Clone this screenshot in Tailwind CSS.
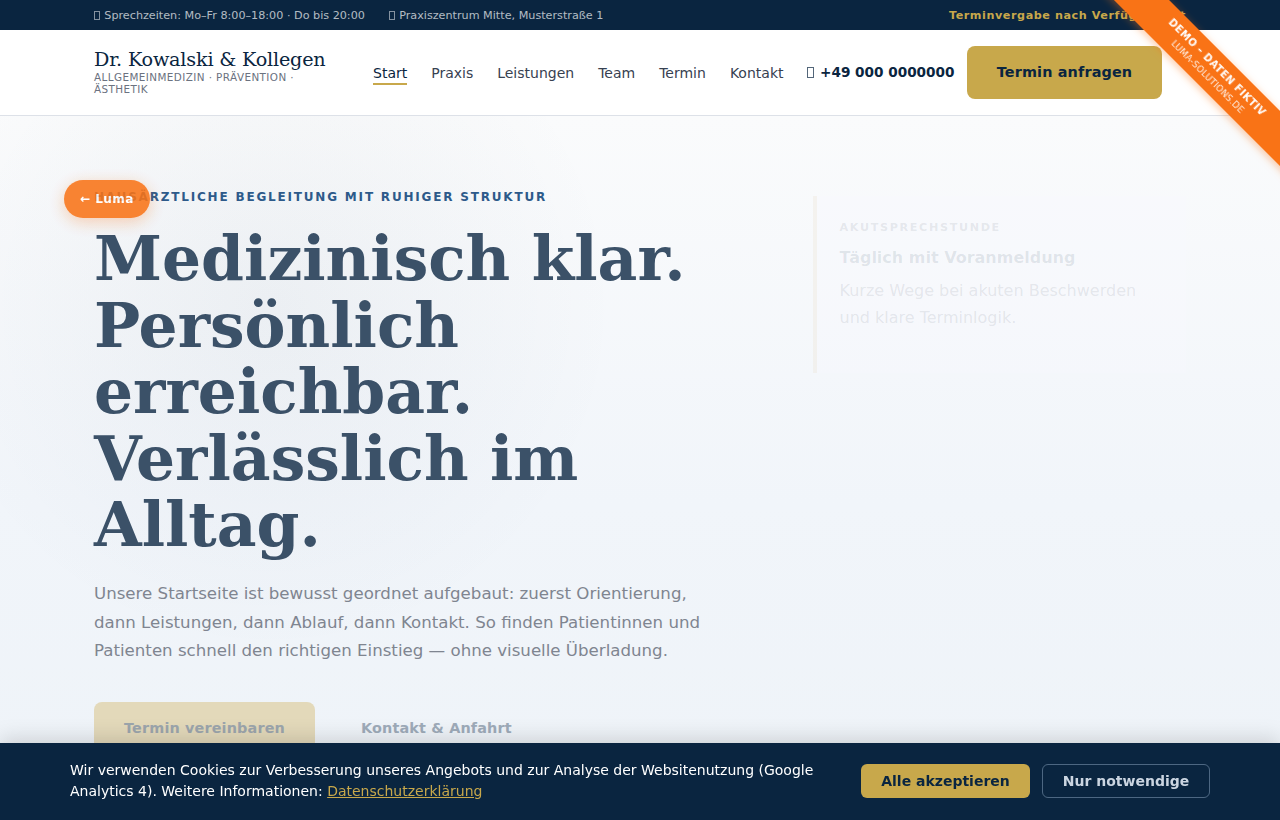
<!DOCTYPE html>
<html lang="de">
  <head>
    <meta charset="utf-8" />
    <meta name="viewport" content="width=device-width, initial-scale=1" />
    <title>Dr. Kowalski &amp; Kollegen</title>
    <script src="https://cdn.jsdelivr.net/npm/@tailwindcss/browser@4"></script>
  </head>
  <body class="flex h-screen flex-col overflow-hidden bg-[#eef3f8] font-['DejaVu_Sans',sans-serif] text-[#0a2540]">
    <!-- Top bar -->
    <div class="h-[30px] shrink-0 bg-[#0a2540] text-[11.2px] text-white/70">
      <div class="mx-auto flex h-full max-w-[1140px] items-center justify-between px-6 pt-0.5">
        <div class="flex gap-6">
          <span class="flex items-center"><i class="mr-[4.3px] h-[9px] w-[6px] border border-white/50"></i>Sprechzeiten: Mo–Fr 8:00–18:00 · Do bis 20:00</span>
          <span class="flex items-center"><i class="mr-[4.3px] h-[9px] w-[6px] border border-white/50"></i>Praxiszentrum Mitte, Musterstraße 1</span>
        </div>
        <span class="font-bold tracking-[0.56px] text-[#c8a84b]">Terminvergabe nach Verfügbarkeit</span>
      </div>
    </div>

    <!-- Header -->
    <header class="h-[86px] shrink-0 border-b border-[#dde1e8] bg-white">
      <div class="mx-auto flex h-full max-w-[1140px] items-center px-6">
        <div class="-mt-0.5 w-[255px] shrink-0">
          <p class="font-['DejaVu_Serif',serif] text-[19.2px] leading-[23px] tracking-[-0.19px]">Dr. Kowalski &amp; Kollegen</p>
          <p class="w-[231px] text-[10.4px] leading-3 tracking-[0.42px] text-[#6b7280] uppercase">Allgemeinmedizin · Prävention · Ästhetik</p>
        </div>
        <nav class="mt-0.5 ml-6 flex shrink-0 gap-6 text-[14px] leading-5 text-[#374151]">
          <a href="#" class="border-b-2 border-[#c8a84b] text-[#0a2540]">Start</a>
          <a href="#">Praxis</a>
          <a href="#">Leistungen</a>
          <a href="#">Team</a>
          <a href="#">Termin</a>
          <a href="#">Kontakt</a>
        </nav>
        <a href="#" class="ml-6 flex w-[148px] shrink-0 items-center text-[13.6px] font-bold whitespace-nowrap"><i class="mr-[5.6px] h-[11px] w-[7px] border border-[#0a2540]/70"></i>+49 000 0000000</a>
        <a href="#" class="mr-6 ml-auto flex h-[53px] w-[195px] shrink-0 items-center justify-center rounded-lg bg-[#c8a84b] text-[14.4px] font-bold tracking-[0.15px]">Termin anfragen</a>
      </div>
    </header>

    <!-- Hero -->
    <section class="min-h-0 flex-1 overflow-hidden bg-[radial-gradient(circle_at_270px_190px,rgba(10,37,64,0.045),transparent_350px),linear-gradient(180deg,#fafbfc_0%,#f1f5fa_55%,#eef3f8_100%)]">
      <div class="mx-auto flex max-w-[1140px] items-start justify-between px-6 pt-[70px]">
        <div class="w-[640px]">
          <p class="text-xs leading-[22px] font-bold tracking-[1.81px] text-[#2d5a8a] uppercase">Hausärztliche Begleitung mit ruhiger Struktur</p>
          <h1 class="mt-[17px] font-['DejaVu_Serif',serif] text-[61.44px] leading-[66.5px] font-bold text-[#3b5168]">Medizinisch klar.<br />Persönlich<br />erreichbar.<br />Verlässlich im<br />Alltag.</h1>
          <p class="mt-[22.8px] text-[16.64px] leading-[28.4px] text-[#7f8590]">Unsere Startseite ist bewusst geordnet aufgebaut: zuerst Orientierung,<br />dann Leistungen, dann Ablauf, dann Kontakt. So finden Patientinnen und<br />Patienten schnell den richtigen Einstieg — ohne visuelle Überladung.</p>
          <div class="mt-[36.5px] flex gap-4 text-[14.4px] font-bold tracking-[0.15px]">
            <a href="#" class="flex h-[53px] w-[221px] items-center justify-center rounded-lg bg-[#e3d9ba] text-[#9ca5ac]">Termin vereinbaren</a>
            <a href="#" class="flex h-[53px] items-center px-[30px] text-[#9eabb9]">Kontakt &amp; Anfahrt</a>
          </div>
        </div>

        <aside class="mt-2.5 h-[177px] w-[373px] border-l-4 border-[#c8a84b]/8 bg-[#f9faff]/30 px-[22.5px] pt-[22px] text-[#0a2540]/10">
          <p class="pt-px text-[11.2px] leading-[18px] font-bold tracking-[1.65px] text-[#6b7280]/14 uppercase">Akutsprechstunde</p>
          <p class="mt-[7px] text-base leading-[27px] font-bold">Täglich mit Voranmeldung</p>
          <p class="mt-1.5 text-base leading-[27px] text-[#6b7280]/15">Kurze Wege bei akuten Beschwerden<br />und klare Terminlogik.</p>
        </aside>
      </div>
    </section>

    <!-- Back link -->
    <a href="#" class="fixed top-[180px] left-16 flex h-[38px] w-[86px] items-center justify-center rounded-full bg-[#f97316] text-xs font-bold tracking-[0.42px] text-white opacity-88 shadow-[0_4px_16px_rgba(249,115,22,0.35)]">← Luma</a>

    <!-- Demo ribbon -->
    <div class="fixed top-[52px] left-[1072.5px] flex h-[39px] w-[280px] rotate-45 flex-col items-center justify-center bg-[#f97316] text-white shadow-[0_2px_8px_rgba(249,115,22,0.4)]">
      <span class="text-[10px] leading-[15px] font-bold tracking-[0.5px]">DEMO – DATEN FIKTIV</span>
      <span class="text-[9px] leading-[12px] tracking-[0.2px] opacity-90">LUMA-SOLUTIONS.DE</span>
    </div>

    <!-- Cookie banner -->
    <div class="fixed inset-x-0 bottom-0 h-[77px] bg-[#0a2540] shadow-[0_-4px_20px_rgba(0,0,0,0.15)]">
      <div class="mx-auto flex h-full max-w-[1140px] items-center justify-between pb-px">
        <p class="w-[760px] pb-px text-[14px] leading-[21px] text-white">Wir verwenden Cookies zur Verbesserung unseres Angebots und zur Analyse der Websitenutzung (Google Analytics 4). Weitere Informationen: <a href="#" class="text-[#c8a84b] underline">Datenschutzerklärung</a></p>
        <div class="flex gap-3 text-[14px] font-bold">
          <button class="h-[34px] w-[169px] rounded-md bg-[#c8a84b] text-[#0a2540]">Alle akzeptieren</button>
          <button class="h-[34px] w-[168px] rounded-md border border-[#8fa9c4]/50 text-[#cbd5e1]">Nur notwendige</button>
        </div>
      </div>
    </div>
  </body>
</html>
